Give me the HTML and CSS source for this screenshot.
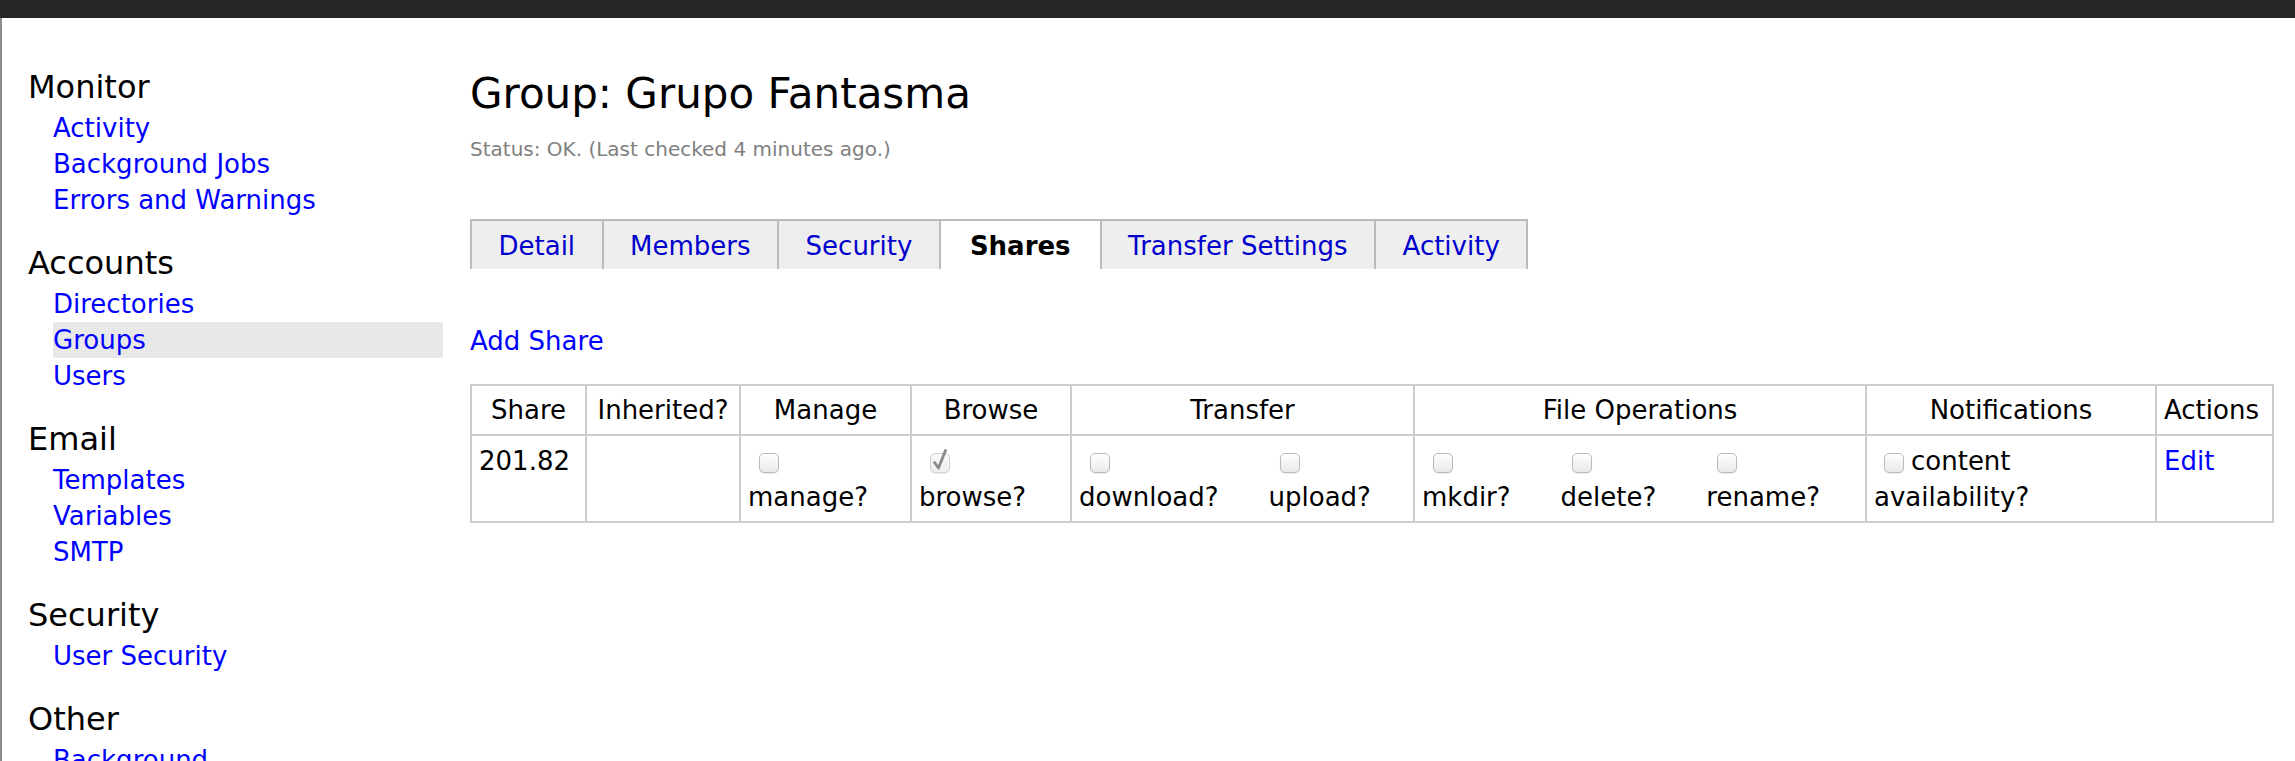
FILE: index.html
```html
<!DOCTYPE html>
<html lang="en">
<head>
  <meta charset="UTF-8" />
  <title>Group: Grupo Fantasma</title>
  <link rel="stylesheet" href="styles.css">
</head>
<body>

  <div class="topbar"></div>

  <div class="page">
    <nav class="sidebar">
      <h3>Monitor</h3>
      <ul>
        <li><a href="#">Activity</a></li>
        <li><a href="#">Background Jobs</a></li>
        <li><a href="#">Errors and Warnings</a></li>
      </ul>

      <h3>Accounts</h3>
      <ul>
        <li><a href="#">Directories</a></li>
        <li class="active"><a href="#">Groups</a></li>
        <li><a href="#">Users</a></li>
      </ul>

      <h3>Email</h3>
      <ul>
        <li><a href="#">Templates</a></li>
        <li><a href="#">Variables</a></li>
        <li><a href="#">SMTP</a></li>
      </ul>

      <h3>Security</h3>
      <ul>
        <li><a href="#">User Security</a></li>
      </ul>

      <h3>Other</h3>
      <ul>
        <li><a href="#">Background</a></li>
      </ul>
    </nav>

    <main class="content">
      <h1>Group: Grupo Fantasma</h1>
      <p class="status">Status: OK. (Last checked 4 minutes ago.)</p>

      <div class="tabs">
        <a href="#" class="tab">Detail</a>
        <a href="#" class="tab">Members</a>
        <a href="#" class="tab">Security</a>
        <span class="tab current">Shares</span>
        <a href="#" class="tab">Transfer Settings</a>
        <a href="#" class="tab">Activity</a>
      </div>

      <div class="toolbar">
        <a href="#">Add Share</a>
      </div>

      <table class="shares">
        <colgroup>
          <col class="c-share">
          <col class="c-inherited">
          <col class="c-manage">
          <col class="c-browse">
          <col class="c-transfer">
          <col class="c-fileops">
          <col class="c-notify">
          <col class="c-actions">
        </colgroup>
        <thead>
          <tr>
            <th>Share</th>
            <th>Inherited?</th>
            <th>Manage</th>
            <th>Browse</th>
            <th>Transfer</th>
            <th>File Operations</th>
            <th>Notifications</th>
            <th class="left">Actions</th>
          </tr>
        </thead>
        <tbody>
          <tr>
            <td>201.82</td>
            <td></td>
            <td>
              <div class="opts">
                <label class="opt"><span class="cb"></span><br>manage?</label>
              </div>
            </td>
            <td>
              <div class="opts">
                <label class="opt"><span class="cb checked"><svg width="20" height="26" viewBox="0 0 20 26"><path d="M4.5 15.5 L8.5 21 L15.5 3.5" fill="none" stroke="#8a8a8a" stroke-width="2.8" stroke-linecap="round" stroke-linejoin="round"/></svg></span><br>browse?</label>
              </div>
            </td>
            <td>
              <div class="opts">
                <label class="opt"><span class="cb"></span><br>download?</label>
                <label class="opt"><span class="cb"></span><br>upload?</label>
              </div>
            </td>
            <td>
              <div class="opts">
                <label class="opt"><span class="cb"></span><br>mkdir?</label>
                <label class="opt"><span class="cb"></span><br>delete?</label>
                <label class="opt"><span class="cb"></span><br>rename?</label>
              </div>
            </td>
            <td><label><span class="cb inline"></span>content availability?</label></td>
            <td><a href="#">Edit</a></td>
          </tr>
        </tbody>
      </table>
    </main>
  </div>

</body>
</html>
```

FILE: styles.css
```css
* {
  box-sizing: border-box;
}
body {
  margin: 0;
  background: #fff;
  color: #000;
  font-family: "DejaVu Sans", Verdana, sans-serif;
}
a {
  color: #0000ff;
  text-decoration: none;
}
.topbar {
  height: 18px;
  background: #252628;
}
.page {
  display: flex;
  border-left: 2px solid #8c8c8c;
  min-height: calc(100vh - 18px);
}

/* sidebar */
.sidebar {
  width: 441px;
  flex-shrink: 0;
  padding: 49px 0 0 26px;
}
.sidebar h3 {
  margin: 0 0 3px;
  font-size: 32px;
  font-weight: normal;
  line-height: 40px;
}
.sidebar ul {
  list-style: none;
  margin: 0 0 25px;
  padding: 0 0 0 25px;
}
.sidebar li {
  font-size: 26px;
  line-height: 36px;
}
.sidebar li.active {
  background: #e8e8e8;
}

/* main */
.content {
  flex: 1;
  padding: 51px 23px 0 27px;
}
.content h1 {
  margin: 0;
  font-size: 42px;
  font-weight: normal;
  line-height: 50px;
}
.status {
  margin: 18px 0 0;
  font-size: 20px;
  line-height: 24px;
  color: #808080;
}
.tabs {
  display: flex;
  margin-top: 58px;
}
.tab {
  padding: 7px 26.5px 5px;
  border: 2px solid #bbb;
  border-right: 0;
  border-bottom: 0;
  background: #eee;
  color: #0000cc;
  font-size: 26px;
  line-height: 36px;
}
.tab:last-child {
  border-right: 2px solid #bbb;
}
.tab.current {
  padding: 7px 29px 5px;
  background: #fff;
  color: #000;
  font-weight: bold;
}
.toolbar {
  margin-top: 54px;
  font-size: 26px;
  line-height: 36px;
}

/* shares table */
.shares {
  width: 100%;
  margin-top: 25px;
  border-collapse: collapse;
  table-layout: fixed;
}
.c-share { width: 115px; }
.c-inherited { width: 154px; }
.c-manage { width: 171px; }
.c-browse { width: 160px; }
.c-transfer { width: 343px; }
.c-fileops { width: 452px; }
.c-notify { width: 290px; }
.c-actions { width: 117px; }
.shares th,
.shares td {
  border: 2px solid #ccc;
  padding: 6px 7px;
  font-size: 26px;
  line-height: 36px;
  font-weight: normal;
}
.shares th.left {
  text-align: left;
}
.shares td {
  padding: 7px 7px 6px;
  vertical-align: top;
}
.opts {
  display: flex;
  gap: 50px;
}
.cb {
  display: inline-block;
  position: relative;
  width: 20px;
  height: 20px;
  margin-left: 11px;
  border: 1px solid #b9b9b9;
  border-radius: 5px;
  background: linear-gradient(#ffffff, #e9e9e9);
  box-shadow: 0 1px 1px rgba(0, 0, 0, 0.08);
  vertical-align: -3px;
}
.cb.inline {
  margin: 0 7px 0 10px;
}
.cb.checked {
  border-color: #cfcfcf;
  background: linear-gradient(#fafafa, #eeeeee);
}
.cb svg {
  position: absolute;
  left: -1px;
  top: -7px;
}
```
